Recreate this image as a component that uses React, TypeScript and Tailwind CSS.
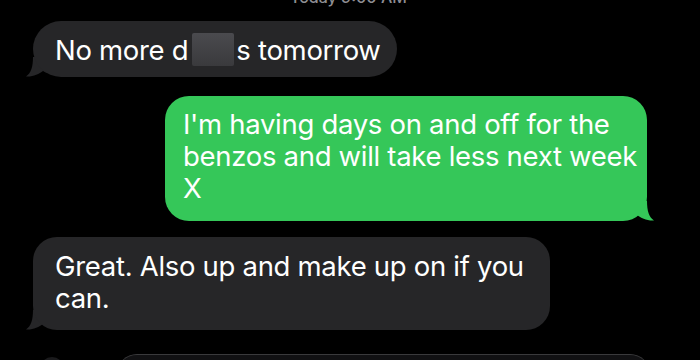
import React from 'react'

const font = { fontFamily: 'Inter, "Noto Sans", sans-serif' }

function TailLeft({ color }: { color: string }) {
  return (
    <svg className="absolute -left-[7px] bottom-0" width="22" height="20" viewBox="0 0 22 20">
      <path d="M22 0 L7 0 C7 10 5 16 0 19.5 C7 20 13 17 17 14 C19 15 21 16 22 16 Z" fill={color} />
    </svg>
  )
}

function TailRight({ color }: { color: string }) {
  return (
    <svg className="absolute -right-[7px] bottom-0" width="22" height="20" viewBox="0 0 22 20">
      <path d="M0 0 L15 0 C15 10 17 16 22 19.5 C15 20 9 17 5 14 C3 15 1 16 0 16 Z" fill={color} />
    </svg>
  )
}

export default function App() {
  return (
    <div
      className="w-[700px] h-[360px] bg-black overflow-hidden flex flex-col text-white antialiased"
      style={font}
    >
      <div className="h-[21px] shrink-0 relative">
        <div className="absolute left-[290px] -top-[15px] text-[16px] text-[#8e8e93] font-medium">Today 9:00 AM</div>
      </div>

      {/* incoming 1 */}
      <div className="shrink-0 ml-[33px] relative w-[364px]">
        <div className="relative z-10 bg-[#262628] rounded-[28px] h-[56px] pl-[22px] pt-[1px] flex items-center text-[27.5px] leading-[32px] tracking-[-0.3px] whitespace-nowrap">
          <span>No more d</span>
          <span className="inline-block w-[42px] h-[33px] ml-[4px] mr-[2px] bg-gradient-to-b from-[#4a4a4e] to-[#3a3a3d] rounded-[2px]" />
          <span>s tomorrow</span>
        </div>
        <TailLeft color="#262628" />
      </div>

      {/* outgoing */}
      <div className="shrink-0 mt-[19px] ml-[165px] relative w-[482px]">
        <div className="relative z-10 bg-[#35c759] rounded-[24px] h-[125px] pl-[18px] pr-[10px] pt-[12px] text-[27.5px] leading-[32px] tracking-[-0.3px] whitespace-nowrap">
          <div>I'm having days on and off for the</div>
          <div>benzos and will take less next week</div>
          <div>X</div>
        </div>
        <TailRight color="#35c759" />
      </div>

      {/* incoming 2 */}
      <div className="shrink-0 mt-[16px] ml-[33px] relative w-[517px]">
        <div className="relative z-10 bg-[#262628] rounded-[24px] h-[93px] pl-[22px] pt-[13px] text-[27.5px] leading-[32px] tracking-[-0.3px] whitespace-nowrap">
          <div>Great. Also up and make up on if you</div>
          <div>can.</div>
        </div>
        <TailLeft color="#262628" />
      </div>

      {/* partially visible next row */}
      <div className="shrink-0 mt-[24px] flex items-start">
        <div className="ml-[40px] w-[24px] h-[24px] rounded-full bg-[#1a1a1c] mt-[3px]" />
        <div className="ml-[53px] w-[533px] h-[40px] rounded-[24px] bg-[#111113] border-t border-[#3a3a3c]" />
      </div>
    </div>
  )
}
